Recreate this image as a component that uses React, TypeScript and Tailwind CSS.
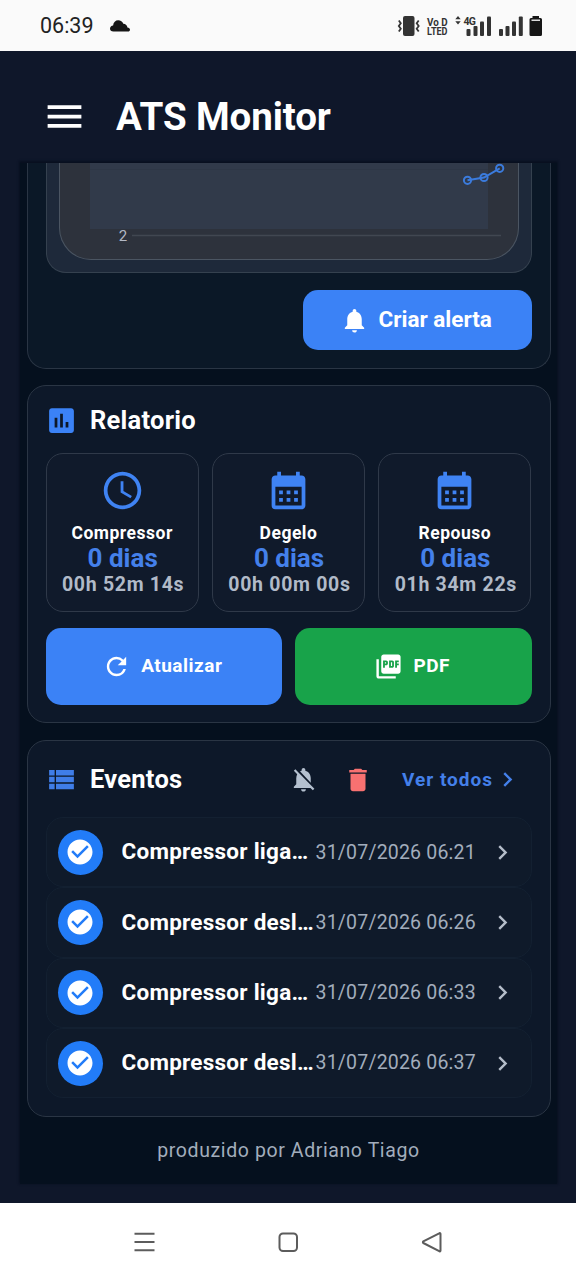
import type { ReactNode } from 'react';
import type { IconType } from 'react-icons';
import {
  MdAssessment,
  MdCalendarMonth,
  MdCheckCircle,
  MdChevronRight,
  MdDelete,
  MdMenu,
  MdNotifications,
  MdNotificationsOff,
  MdPictureAsPdf,
  MdRefresh,
  MdSchedule,
  MdViewList,
} from 'react-icons/md';

interface Stat {
  icon: IconType;
  label: string;
  days: string;
  time: string;
}

interface EventItem {
  name: string;
  date: string;
}

const stats: Stat[] = [
  { icon: MdSchedule, label: 'Compressor', days: '0 dias', time: '00h 52m 14s' },
  { icon: MdCalendarMonth, label: 'Degelo', days: '0 dias', time: '00h 00m 00s' },
  { icon: MdCalendarMonth, label: 'Repouso', days: '0 dias', time: '01h 34m 22s' },
];

const events: EventItem[] = [
  { name: 'Compressor liga…', date: '31/07/2026 06:21' },
  { name: 'Compressor desl…', date: '31/07/2026 06:26' },
  { name: 'Compressor liga…', date: '31/07/2026 06:33' },
  { name: 'Compressor desl…', date: '31/07/2026 06:37' },
];

function StatusBar() {
  return (
    <div className="flex h-[51px] shrink-0 items-center bg-[#fafafa] pl-10 pt-px text-[#222]">
      <span className="w-[70px] text-[21.5px] leading-6">06:39</span>
      <svg width="20" height="13" viewBox="0 0 20 13" fill="#161616">
        <path d="M3.5 11.5C1.2 11.5 0 10.300 0 8.800C0 7 1.400 5.800 3.100 5.600C3.400 2.300 5.500 .3 8.200 .3C10.600 .3 12.500 1.500 13.300 3.700C15.700 3.900 17.200 5.300 17.400 7.400C19 7.500 20 8.400 20 9.700C20 10.800 19.200 11.500 18 11.500Z" />
      </svg>
      <svg className="ml-auto mr-8" width="148" height="26" viewBox="396 13 148 26" fill="#333">
        {/* vibrate */}
        <rect x="403" y="16" width="11.500" height="20" rx="2" />
        <path d="M398.800 20.500l2 2.700-2 2.800 2 2.800-2 2.700M418.700 20.500l-2 2.700 2 2.800-2 2.800 2 2.700" fill="none" stroke="#333" strokeWidth="1.800" />
        {/* VoLTE */}
        <g fontFamily="Roboto, sans-serif" fontWeight="700">
          <text x="427" y="25.500" fontSize="11.500" textLength="20.500" lengthAdjust="spacingAndGlyphs">Vo D</text>
          <text x="427" y="35.300" fontSize="11.500" textLength="20.500" lengthAdjust="spacingAndGlyphs">LTED</text>
        </g>
        <path d="M458 16l2.700 3.200h-5.400zM458 24.500l2.700-3.200h-5.400z" />
        <text x="463.500" y="24.500" fontSize="10.500" fontWeight="700" fontFamily="Roboto, sans-serif" textLength="12.500">4G</text>
        {/* signal */}
        <rect x="466.500" y="29" width="4" height="7" rx="1" />
        <rect x="473.500" y="26" width="4" height="10" rx="1" />
        <rect x="480" y="21.500" width="4" height="14.500" rx="1" />
        <rect x="487" y="16.500" width="4" height="19.500" rx="1" />
        <rect x="499" y="29" width="4" height="7" rx="1" />
        <rect x="505.500" y="26" width="4" height="10" rx="1" />
        <rect x="512" y="21.500" width="4" height="14.500" rx="1" />
        <rect x="518.800" y="16.500" width="4" height="19.500" rx="1" />
        {/* battery */}
        <path d="M532.500 16h6.500v2h1.500a1.500 1.500 0 0 1 1.500 1.500v15a1.500 1.500 0 0 1-1.500 1.500h-9.500a1.500 1.500 0 0 1-1.500-1.500v-15a1.500 1.500 0 0 1 1.500-1.500h1.500z" fill="#161616" />
        <rect x="531.500" y="19.500" width="8.500" height="1.500" fill="#ddd" />
      </svg>
    </div>
  );
}

function Header() {
  return (
    <header className="flex h-[112px] shrink-0 items-center pl-[42px] pt-[18px]">
      <MdMenu size={45} className="text-white" />
      <h1 className="ml-[29px] pt-[3px] text-[38.500px] font-bold leading-none tracking-[-0.1px] text-white">ATS Monitor</h1>
    </header>
  );
}

function ChartCard() {
  return (
    <section className="flex h-[206px] shrink-0 flex-col rounded-b-[19px] border border-t-0 border-[#2a3544] bg-[#0b1827] px-[18px]">
      <div className="h-[110px] overflow-hidden rounded-b-[20px] border border-t-0 border-[#35414f] bg-[#1e293a] px-3">
        <div className="h-[97px] overflow-hidden rounded-b-[32px] border border-t-0 border-[#4b5562] bg-[#2d323c]">
          <svg width="459" height="97" viewBox="60 163 459 97">
            <rect x="90" y="163" width="398" height="66" fill="#313a4a" />
            <path d="M90 169.500H488" stroke="#2e3746" strokeWidth="1" />
            <path d="M132 235.500H501" stroke="#414751" strokeWidth="1.300" />
            <text x="118.800" y="241" fontSize="15" fontFamily="Roboto, sans-serif" fill="#b3b9c5">2</text>
            <g stroke="#3b7bdc" strokeWidth="2" fill="none">
              <path d="M467.500 180.300L484 177.500L499.700 168.300" />
              <circle cx="467.500" cy="180.300" r="3.600" />
              <circle cx="484" cy="177.500" r="3.600" />
              <circle cx="499.700" cy="168.300" r="3.600" />
            </g>
          </svg>
        </div>
      </div>
      <button className="mt-[17px] flex h-[60px] w-[229px] items-center self-end rounded-[15px] bg-[#3b82f6] pl-[37px] text-white">
        <MdNotifications size={29} />
        <span className="ml-[10px] text-[22.500px] font-bold">Criar alerta</span>
      </button>
    </section>
  );
}

function Card({ className, children }: { className: string; children: ReactNode }) {
  return (
    <section className={`shrink-0 rounded-[19px] border border-[#2a3544] bg-[#0d1829] px-[18px] ${className}`}>
      {children}
    </section>
  );
}

function ReportCard() {
  return (
    <Card className="mt-4 h-[338px]">
      <div className="flex h-[67px] items-center pt-px">
        <MdAssessment size={33} className="-ml-px text-[#3b82f6]" />
        <h2 className="ml-[12.500px] text-[25.500px] font-bold tracking-[0.250px] text-white">Relatorio</h2>
      </div>
      <div className="grid grid-cols-3 gap-[13px]">
        {stats.map(({ icon: Icon, label, days, time }) => (
          <div key={label} className="flex h-[159px] flex-col items-center rounded-[17px] border border-[#2f3949] bg-[#101a2b] pt-[14px]">
            <Icon size={45} className="text-[#3f83f3]" />
            <span className="mt-[8px] text-[17.500px] font-bold leading-6 tracking-[0.500px] text-white">{label}</span>
            <span className="pl-px text-[26px] font-bold leading-[27px] text-[#4480ea]">{days}</span>
            <span className="whitespace-nowrap pl-[2px] text-[19.500px] font-bold leading-[26px] tracking-[0.700px] text-[#b1bac8]">{time}</span>
          </div>
        ))}
      </div>
      <div className="mt-4 grid grid-cols-2 gap-[13px] text-[19px] font-bold tracking-[0.500px] text-white">
        <button className="flex h-[77px] items-center justify-center gap-[10px] rounded-[15px] bg-[#3b82f6] pr-[3px]">
          <MdRefresh size={29} />
          Atualizar
        </button>
        <button className="flex h-[77px] items-center justify-center gap-[10px] rounded-[15px] bg-[#18a34a] pr-[2px]">
          <MdPictureAsPdf size={29} />
          PDF
        </button>
      </div>
    </Card>
  );
}

function EventsCard() {
  return (
    <Card className="mt-[17px] h-[377px]">
      <div className="flex h-[76px] items-center pt-px">
        <MdViewList size={33} className="-ml-px text-[#3f7de8]" />
        <h2 className="ml-[12.500px] text-[25.500px] font-bold tracking-[0.250px] text-white">Eventos</h2>
        <div className="ml-auto flex items-center pr-[9.500px]">
          <MdNotificationsOff size={29} className="text-[#b4c0cf]" />
          <MdDelete size={30} className="ml-[25px] text-[#f87171]" />
          <span className="ml-[29px] pt-px text-[19px] font-bold tracking-[1px] text-[#4480ea]">Ver todos</span>
          <MdChevronRight size={29} className="text-[#4480ea]" />
        </div>
      </div>
      <ul>
        {events.map((event) => (
          <li key={event.date} className="flex h-[70.300px] items-center rounded-[17px] border border-[#132031] bg-[#0f1a2a] pl-[11px]">
            <span className="flex size-[45px] items-center justify-center rounded-full bg-[#227cf8]">
              <MdCheckCircle size={30} className="text-white" />
            </span>
            <span className="ml-[19px] w-[194px] whitespace-nowrap text-[22.500px] font-bold tracking-[0.250px] text-white">{event.name}</span>
            <span className="w-[172.500px] whitespace-nowrap text-[19.500px] tracking-[0.200px] text-[#a2adbc]">{event.date}</span>
            <MdChevronRight size={29} className="text-[#b4bdc9]" />
          </li>
        ))}
      </ul>
    </Card>
  );
}

function NavBar() {
  return (
    <nav className="flex h-[77px] shrink-0 items-center justify-center gap-[120px] bg-white text-[#5c5c5c]">
      <svg width="24" height="24" viewBox="0 0 24 24" fill="none" stroke="currentColor" strokeWidth="2">
        <path d="M2.500 3.800h20M2.500 12h20M2.500 20.300h20" />
      </svg>
      <svg width="24" height="24" viewBox="0 0 24 24" fill="none" stroke="currentColor" strokeWidth="2">
        <rect x="3.500" y="3.500" width="17.500" height="17.500" rx="3.500" />
      </svg>
      <svg width="24" height="24" viewBox="0 0 24 24" fill="none" stroke="currentColor" strokeWidth="2" strokeLinejoin="round">
        <path d="M20.500 4.300v16.200a.8.8 0 0 1-1.300.7L3.300 13a1 1 0 0 1 0-1.600L19.200 3.300a.8.8 0 0 1 1.300.7z" />
      </svg>
    </nav>
  );
}

export default function App() {
  return (
    <div className="flex h-[1280px] w-[576px] flex-col overflow-hidden bg-[#0f172a] font-[Roboto,sans-serif]">
      <StatusBar />
      <Header />
      <main className="ml-5 mr-[19px] flex h-[1021px] shrink-0 flex-col bg-[#05101e] pl-[6.500px] pr-[6.500px] shadow-[0_-1px_2px_1px_#081020]">
        <ChartCard />
        <ReportCard />
        <EventsCard />
        <p className="mt-[20px] text-center text-[19.500px] leading-7 tracking-[0.600px] text-[#a2adbc]">
          produzido por Adriano Tiago
        </p>
      </main>
      <div className="h-[19px] shrink-0" />
      <NavBar />
    </div>
  );
}
